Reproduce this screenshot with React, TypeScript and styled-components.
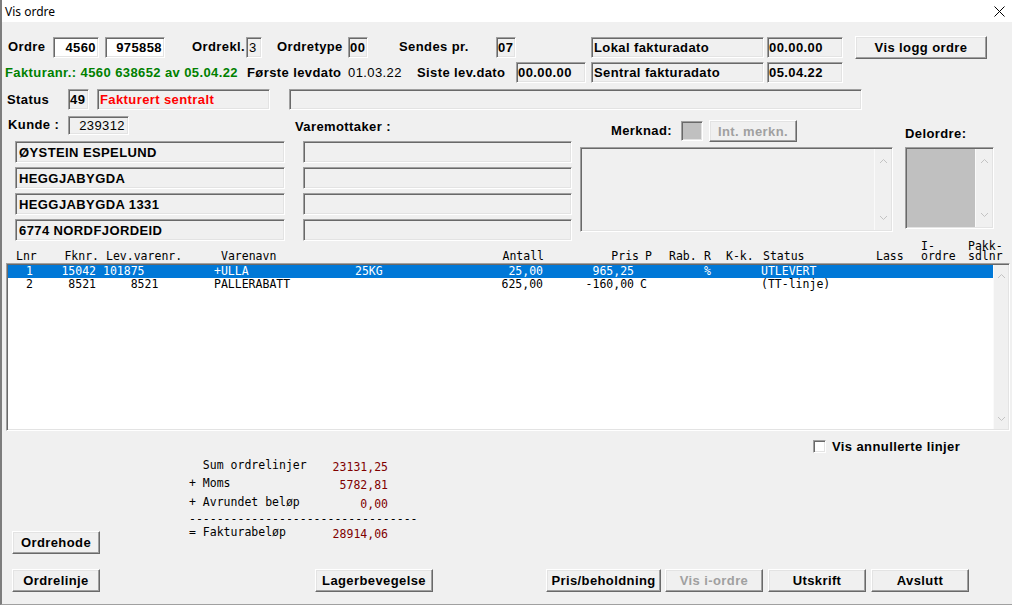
import React from "react";
import styled, { createGlobalStyle, css } from "styled-components";

const Global = createGlobalStyle`
  html, body { margin: 0; padding: 0; background: #f0f0f0; overflow: hidden; }
  * { box-sizing: border-box; }
`;

const sunken = css`
  border-style: solid;
  border-width: 1px;
  border-color: #a0a0a0 #ffffff #ffffff #a0a0a0;
  box-shadow: inset 1px 1px 0 #696969, inset -1px -1px 0 #e3e3e3;
`;

const raised = css`
  border-style: solid;
  border-width: 1px;
  border-color: #ffffff #696969 #696969 #ffffff;
  box-shadow: inset -1px -1px 0 #a0a0a0, inset 1px 1px 0 #e3e3e3;
`;

const Window = styled.div`
  width: 1012px;
  height: 605px;
  background: #f0f0f0;
  border-left: 2px solid #7d7d7d;
  border-bottom: 1px solid #a0a0a0;
  display: flex;
  flex-direction: column;
  font-family: "Liberation Sans", Arial, sans-serif;
  font-size: 13px;
  font-weight: bold;
  letter-spacing: 0.4px;
  color: #000;
  overflow: hidden;
`;

const TitleBar = styled.div`
  flex: none;
  height: 22px;
  background: #ffffff;
  display: flex;
  align-items: center;
  justify-content: space-between;
  padding: 0 7px 0 3px;
`;

const Title = styled.span`
  font-family: "Noto Sans", "Liberation Sans", sans-serif;
  font-size: 12px;
  font-weight: normal;
  letter-spacing: 0;
`;

const Row = styled.div<{ $mt: number; $h: number }>`
  flex: none;
  display: flex;
  align-items: center;
  margin-top: ${(p) => p.$mt}px;
  height: ${(p) => p.$h}px;
`;

const Label = styled.span<{ $w?: number; $ml?: number; $color?: string; $normal?: boolean }>`
  flex: none;
  ${(p) => (p.$w ? `width: ${p.$w}px;` : "")}
  margin-left: ${(p) => p.$ml ?? 0}px;
  white-space: nowrap;
  color: ${(p) => p.$color ?? "#000"};
  font-weight: ${(p) => (p.$normal ? "normal" : "bold")};
  line-height: 14px;
`;

const Field = styled.div<{
  $w: number;
  $h?: number;
  $ml?: number;
  $bg?: string;
  $right?: boolean;
  $normal?: boolean;
  $color?: string;
  $pl?: number;
  $pr?: number;
}>`
  ${sunken}
  flex: none;
  width: ${(p) => p.$w}px;
  height: ${(p) => p.$h ?? 21}px;
  margin-left: ${(p) => p.$ml ?? 0}px;
  background: ${(p) => p.$bg ?? "#f0f0f0"};
  display: flex;
  align-items: center;
  justify-content: ${(p) => (p.$right ? "flex-end" : "flex-start")};
  padding: 0 ${(p) => p.$pr ?? 2}px 0 ${(p) => p.$pl ?? 1}px;
  font-weight: ${(p) => (p.$normal ? "normal" : "bold")};
  color: ${(p) => p.$color ?? "#000"};
  white-space: nowrap;
  overflow: hidden;
`;

const Button = styled.button<{ $w: number; $ml?: number; $h?: number }>`
  ${raised}
  flex: none;
  width: ${(p) => p.$w}px;
  height: ${(p) => p.$h ?? 23}px;
  margin-left: ${(p) => p.$ml ?? 0}px;
  padding: 0;
  background: #f0f0f0;
  font-family: inherit;
  font-size: 13px;
  font-weight: bold;
  letter-spacing: 0.4px;
  color: #000;
  white-space: nowrap;
  &:disabled {
    color: #a0a0a0;
  }
`;

/* lower header section */
const Lower = styled.div`
  flex: none;
  display: flex;
  align-items: flex-start;
  margin-top: 5px;
`;

const Column = styled.div<{ $w?: number; $ml?: number }>`
  flex: none;
  display: flex;
  flex-direction: column;
  ${(p) => (p.$w ? `width: ${p.$w}px;` : "")}
  margin-left: ${(p) => p.$ml ?? 0}px;
`;

const KundeRow = styled.div`
  display: flex;
  align-items: center;
  height: 20px;
`;

const ColHead = styled.div<{ $h: number; $pb?: number }>`
  height: ${(p) => p.$h}px;
  display: flex;
  align-items: flex-end;
  padding-bottom: ${(p) => p.$pb ?? 3}px;
  white-space: nowrap;
  line-height: 14px;
`;

const AddrList = styled.div<{ $ml: number }>`
  display: flex;
  flex-direction: column;
  gap: 4px;
  margin-top: 6px;
  margin-left: ${(p) => p.$ml}px;
`;

const NoteHead = styled.div`
  display: flex;
  align-items: center;
  height: 22px;
  margin-top: 5px;
`;

const Swatch = styled.div`
  ${sunken}
  flex: none;
  width: 22px;
  height: 20px;
  background: #c0c0c0;
`;

const ListBox = styled.div<{ $w: number; $h: number; $mt: number; $fill: string }>`
  ${sunken}
  width: ${(p) => p.$w}px;
  height: ${(p) => p.$h}px;
  margin-top: ${(p) => p.$mt}px;
  display: flex;
  padding: 1px;
  background: ${(p) => p.$fill};
`;

const ListArea = styled.div`
  flex: 1;
`;

const ScrollBar = styled.div<{ $w?: number; $pt?: number; $pb?: number }>`
  flex: none;
  width: ${(p) => p.$w ?? 17}px;
  background: #f0f0f0;
  border-left: 1px solid #fafafa;
  display: flex;
  flex-direction: column;
  justify-content: space-between;
  align-items: center;
  padding: ${(p) => p.$pt ?? 9}px 0 ${(p) => p.$pb ?? 9}px;
`;

const Chevron = ({ down }: { down?: boolean }) => (
  <svg width="9" height="6" viewBox="0 0 9 6">
    <polyline
      points={down ? "1,1 4.5,4.5 8,1" : "1,5 4.5,1.5 8,5"}
      fill="none"
      stroke="#c3c3c3"
      strokeWidth="1"
    />
  </svg>
);

/* table */
type Col = { w: number; align: "left" | "right" | "center"; hpl?: number; hpr?: number; vpl?: number; vpr?: number };
const cols: Col[] = [
  { w: 48, align: "left", hpl: 6, vpl: 18 },
  { w: 43, align: "right", hpr: 2, vpr: 3 },
  { w: 111, align: "left", hpl: 5, vpl: 4 },
  { w: 140, align: "left", hpl: 9, vpl: 4 },
  { w: 120, align: "left", hpl: 5, vpl: 5 },
  { w: 76, align: "right", hpr: 4, vpr: 3 },
  { w: 91, align: "right", hpr: 0, vpr: 3 },
  { w: 23, align: "left", hpl: 6, vpl: 3 },
  { w: 40, align: "left", hpl: 7, vpl: 0 },
  { w: 18, align: "left", hpl: 2, vpl: 4 },
  { w: 40, align: "left", hpl: 6, vpl: 0 },
  { w: 112, align: "left", hpl: 3, vpl: 3 },
  { w: 42, align: "left", hpl: 4, vpl: 0 },
  { w: 50, align: "left", hpl: 7, vpl: 0 },
  { w: 0, align: "left", hpl: 4, vpl: 0 },
];
const gridTemplate = cols.map((c) => (c.w ? `${c.w}px` : "1fr")).join(" ");

const headers = [
  "Lnr",
  "Fknr.",
  "Lev.varenr.",
  "Varenavn",
  "",
  "Antall",
  "Pris",
  "P",
  "Rab.",
  "R",
  "K-k.",
  "Status",
  "Lass",
  "I-\nordre",
  "Pakk-\nsdlnr",
];

const rows = [
  ["1", "15042", "101875", "+ULLA", "25KG", "25,00", "965,25", "", "", "%", "", "UTLEVERT", "", "", ""],
  ["2", "8521", "    8521", "PALLERABATT", "", "625,00", "-160,00", "C", "", "", "", "(TT-linje)", "", "", ""],
];

const mono = css`
  font-family: "DejaVu Sans Mono", "Liberation Mono", monospace;
  font-size: 11.5px;
  font-weight: normal;
  letter-spacing: 0;
`;

const TableHead = styled.div`
  ${mono}
  flex: none;
  display: grid;
  grid-template-columns: ${gridTemplate};
  height: 22px;
  margin-left: 6px;
  padding-left: 2px;
  width: 1004px;
  color: #000;
`;

const HeadCell = styled.div<{ $align: string; $pl: number; $pr: number }>`
  display: flex;
  align-items: flex-end;
  justify-content: ${(p) => (p.$align === "right" ? "flex-end" : p.$align === "center" ? "center" : "flex-start")};
  text-align: ${(p) => p.$align};
  padding: 0 ${(p) => p.$pr}px 3px ${(p) => p.$pl}px;
  white-space: pre;
  line-height: 10px;
`;

const Table = styled.div`
  ${sunken}
  flex: none;
  margin-left: 4px;
  width: 1004px;
  height: 168px;
  padding: 1px;
  background: #ffffff;
  display: flex;
`;

const Rows = styled.div`
  ${mono}
  flex: 1;
  display: flex;
  flex-direction: column;
`;

const DataRow = styled.div<{ $sel?: boolean }>`
  display: grid;
  grid-template-columns: ${gridTemplate};
  height: 13px;
  line-height: 13px;
  background: ${(p) => (p.$sel ? "#0078d7" : "transparent")};
  color: ${(p) => (p.$sel ? "#ffffff" : "#000")};
`;

const DataCell = styled.div<{ $align: string; $pl: number; $pr: number }>`
  text-align: ${(p) => p.$align};
  padding: 0 ${(p) => p.$pr}px 0 ${(p) => p.$pl}px;
  white-space: pre;
  overflow: hidden;
`;

/* bottom */
const BottomTop = styled.div`
  flex: none;
  display: flex;
  align-items: flex-start;
  height: 126px;
`;

const BottomButtons = styled.div`
  flex: none;
  display: flex;
  align-items: center;
  margin-top: 12px;
`;

const EdgeButton = styled(Button)`
  align-self: flex-end;
  margin-bottom: 3px;
`;

const Sums = styled.div`
  ${mono}
  flex: none;
  width: 240px;
  margin-left: 89px;
  margin-top: 25px;
  display: flex;
  flex-direction: column;
`;

const SumRow = styled.div<{ $h: number }>`
  display: flex;
  align-items: flex-start;
  justify-content: space-between;
  width: 199px;
  height: ${(p) => p.$h}px;
  line-height: ${(p) => p.$h}px;
  white-space: pre;
`;

const DashRow = styled.div`
  height: 12px;
  line-height: 12px;
  white-space: pre;
`;

const SumValue = styled.span`
  color: #800000;
  margin-top: 2px;
`;

const CheckRow = styled.label`
  flex: none;
  display: flex;
  align-items: center;
  gap: 6px;
  margin-left: 384px;
  margin-top: 9px;
  height: 13px;
  white-space: nowrap;
`;

const CheckBox = styled.span`
  ${sunken}
  width: 13px;
  height: 13px;
  background: #ffffff;
`;

export default function App() {
  const addr = ["ØYSTEIN ESPELUND", "HEGGJABYGDA", "HEGGJABYGDA 1331", "6774 NORDFJORDEID"];
  const sums: [string, string, number][] = [
    ["  Sum ordrelinjer", "23131,25", 18],
    ["+ Moms", "5782,81", 18],
    ["+ Avrundet beløp", "0,00", 21],
  ];
  return (
    <>
      <Global />
      <Window>
        <TitleBar>
          <Title>Vis ordre</Title>
          <svg width="11" height="11" viewBox="0 0 11 11">
            <path d="M0.5 0.5 L10.5 10.5 M10.5 0.5 L0.5 10.5" stroke="#000" strokeWidth="1" />
          </svg>
        </TitleBar>

        <Row $mt={13} $h={24}>
          <Label $ml={6} $w={45}>Ordre</Label>
          <Field $w={46} $bg="#ffffff" $right>4560</Field>
          <Field $ml={6} $w={60} $bg="#ffffff" $right>975858</Field>
          <Label $ml={27} $w={54}>Ordrekl.</Label>
          <Field $w={16} $normal $pl={2}>3</Field>
          <Label $ml={15} $w={71}>Ordretype</Label>
          <Field $w={20}>00</Field>
          <Label $ml={31} $w={97}>Sendes pr.</Label>
          <Field $w={20}>07</Field>
          <Field $ml={75} $w={173} $pl={2}>Lokal fakturadato</Field>
          <Field $ml={3} $w={76}>00.00.00</Field>
          <Button $ml={12} $w={132}>Vis logg ordre</Button>
        </Row>

        <Row $mt={3} $h={21}>
          <Label $ml={3} $w={242} $color="#008000">Fakturanr.: 4560 638652 av 05.04.22</Label>
          <Label $w={101}>Første levdato</Label>
          <Label $w={69} $normal>01.03.22</Label>
          <Label $w={99}>Siste lev.dato</Label>
          <Field $w={70}>00.00.00</Field>
          <Field $ml={5} $w={173} $pl={2}>Sentral fakturadato</Field>
          <Field $ml={3} $w={76}>05.04.22</Field>
        </Row>

        <Row $mt={6} $h={21}>
          <Label $ml={5} $w={61}>Status</Label>
          <Field $w={21}>49</Field>
          <Field $ml={8} $w={173} $pl={2} $color="#ff0000">Fakturert sentralt</Field>
          <Field $ml={19} $w={573} />
        </Row>

        <Lower>
          <Column $w={283}>
            <KundeRow>
              <Label $ml={6} $w={60}>Kunde :</Label>
              <Field $w={61} $h={19} $right $normal $pr={3}>239312</Field>
            </KundeRow>
            <AddrList $ml={13}>
              {addr.map((a) => (
                <Field key={a} $w={270} $h={22} $pl={3}>{a}</Field>
              ))}
            </AddrList>
          </Column>

          <Column $ml={10} $w={277}>
            <ColHead $h={20} $pb={1}>Varemottaker :</ColHead>
            <AddrList $ml={8}>
              {[0, 1, 2, 3].map((i) => (
                <Field key={i} $w={269} $h={22} />
              ))}
            </AddrList>
          </Column>

          <Column $ml={8} $w={313}>
            <NoteHead>
              <Label $ml={31} $w={70}>Merknad:</Label>
              <Swatch />
              <Button $ml={6} $w={88} $h={22} disabled>Int. merkn.</Button>
            </NoteHead>
            <ListBox $w={313} $h={85} $mt={5} $fill="#f0f0f0">
              <ListArea />
              <ScrollBar>
                <Chevron />
                <Chevron down />
              </ScrollBar>
            </ListBox>
          </Column>

          <Column $ml={12} $w={89}>
            <ColHead $h={32} $pb={6}>Delordre:</ColHead>
            <ListBox $w={89} $h={82} $mt={0} $fill="#c0c0c0">
              <ListArea />
              <ScrollBar>
                <Chevron />
                <Chevron down />
              </ScrollBar>
            </ListBox>
          </Column>
        </Lower>

        <TableHead>
          {headers.map((h, i) => (
            <HeadCell key={i} $align={cols[i].align} $pl={cols[i].hpl ?? 0} $pr={cols[i].hpr ?? 0}>
              {h}
            </HeadCell>
          ))}
        </TableHead>

        <Table>
          <Rows>
            {rows.map((r, ri) => (
              <DataRow key={ri} $sel={ri === 0}>
                {r.map((v, i) => (
                  <DataCell key={i} $align={cols[i].align} $pl={cols[i].vpl ?? 0} $pr={cols[i].vpr ?? 0}>
                    {v}
                  </DataCell>
                ))}
              </DataRow>
            ))}
          </Rows>
          <ScrollBar $w={15} $pt={8} $pb={7}>
            <Chevron />
            <Chevron down />
          </ScrollBar>
        </Table>

        <BottomTop>
          <EdgeButton $ml={10} $w={88}>Ordrehode</EdgeButton>
          <Sums>
            {sums.map(([l, v, h]) => (
              <SumRow key={l} $h={h}>
                <span>{l}</span>
                <SumValue>{v}</SumValue>
              </SumRow>
            ))}
            <DashRow>---------------------------------</DashRow>
            <SumRow $h={14}>
              <span>= Fakturabeløp</span>
              <SumValue>28914,06</SumValue>
            </SumRow>
          </Sums>
          <CheckRow>
            <CheckBox />
            Vis annullerte linjer
          </CheckRow>
        </BottomTop>

        <BottomButtons>
          <Button $ml={10} $w={88}>Ordrelinje</Button>
          <Button $ml={215} $w={118}>Lagerbevegelse</Button>
          <Button $ml={113} $w={115}>Pris/beholdning</Button>
          <Button $ml={4} $w={98} disabled>Vis i-ordre</Button>
          <Button $ml={5} $w={98}>Utskrift</Button>
          <Button $ml={5} $w={98}>Avslutt</Button>
        </BottomButtons>
      </Window>
    </>
  );
}
